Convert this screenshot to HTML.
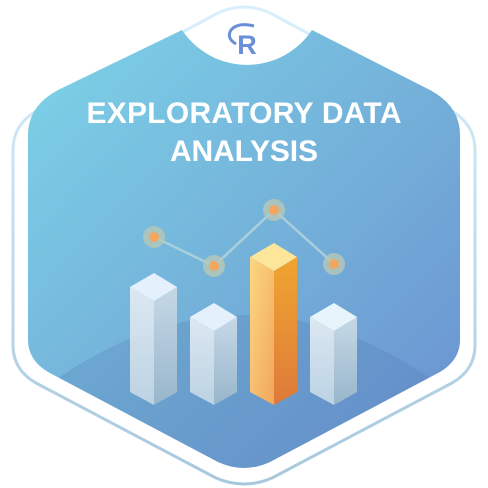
<html style="margin:0;width:488px;height:488px;overflow:hidden"><body style="margin:0;width:488px;height:488px;background:#fff;overflow:hidden">
<svg width="488" height="488" viewBox="0 0 488 488" style="display:block;position:absolute;left:0;top:0">
<defs>
<linearGradient id="bg" x1="0" y1="0" x2="1" y2="1">
<stop offset="0" stop-color="#7dd3e8"/><stop offset="0.5" stop-color="#74b2da"/><stop offset="1" stop-color="#6a8fd0"/></linearGradient>
<linearGradient id="br" x1="0" y1="0" x2="0" y2="1"><stop offset="0" stop-color="#d8f0fb"/><stop offset="1" stop-color="#a8c8de"/></linearGradient>
<linearGradient id="og" x1="0" y1="0" x2="1" y2="1"><stop offset="0" stop-color="#fcd880"/><stop offset="1" stop-color="#f2a65e"/></linearGradient>
<linearGradient id="og2" x1="0" y1="0" x2="0" y2="1"><stop offset="0" stop-color="#f0a530"/><stop offset="1" stop-color="#de7a3a"/></linearGradient>
<linearGradient id="wl" x1="0" y1="0" x2="0" y2="1"><stop offset="0" stop-color="#dce8f2"/><stop offset="1" stop-color="#bcd2e2"/></linearGradient>
<linearGradient id="wr" x1="0" y1="0" x2="0" y2="1"><stop offset="0" stop-color="#c6d8e6"/><stop offset="1" stop-color="#98b6cc"/></linearGradient>
<clipPath id="cp"><path d="M182 30 A78 78 0 0 0 312 30 L430 90 Q460 106 460 135 L460 340 Q460 360 440 372 L270 462 Q244 474 218 462 L48 372 Q28 360 28 340 L28 135 Q28 106 58 90Z"/></clipPath>
</defs>
<path d="M244 7 Q258 7 272 14 L450 110 Q475 124 475 150 L475 345 Q475 370 452 383 L272 478 Q244 490 216 478 L36 383 Q13 370 13 345 L13 150 Q13 124 38 110 L216 14 Q230 7 244 7Z" fill="#fff" stroke="url(#br)" stroke-width="3"/>
<g clip-path="url(#cp)">
<rect x="28" y="28" width="432" height="448" fill="url(#bg)"/>
<path d="M28 400 Q244 230 460 400 L460 475 L28 475Z" fill="#4f78b0" opacity="0.25"/>
</g>
<text x="247" y="54" text-anchor="middle" font-family="Liberation Sans" font-weight="bold" font-size="27" fill="#6a8fd6">R</text>
<path d="M236 44 Q226 38 231 30 Q238 22 254 26" fill="none" stroke="#6a8fd6" stroke-width="3"/>
<g font-family="Liberation Sans, sans-serif" font-weight="bold" font-size="30" fill="#fff" text-anchor="middle">
<text x="244" y="123" textLength="315">EXPLORATORY DATA</text>
<text x="244" y="161" textLength="148">ANALYSIS</text></g>
<polyline points="154,237 214,266 274,210 334,264" fill="none" stroke="#b8d4dc" stroke-width="2.5" opacity=".8"/>
<g fill="#b8c8b8" opacity=".8"><circle cx="154" cy="237" r="11"/><circle cx="214" cy="266" r="11"/><circle cx="274" cy="210" r="11"/><circle cx="334" cy="264" r="11"/></g>
<g fill="#f2a65e"><circle cx="154" cy="237" r="5"/><circle cx="214" cy="266" r="5"/><circle cx="274" cy="210" r="5"/><circle cx="334" cy="264" r="5"/></g>
<path d="M130 287 L154 301 L154 405 L130 392Z" fill="url(#wl)"/>
<path d="M154 301 L177 287 L177 392 L154 405Z" fill="url(#wr)"/>
<path d="M154 273 L177 287 L154 301 L130 287Z" fill="#e4f1fc"/>
<path d="M190 317 L214 331 L214 405 L190 392Z" fill="url(#wl)"/>
<path d="M214 331 L237 317 L237 392 L214 405Z" fill="url(#wr)"/>
<path d="M214 303 L237 317 L214 331 L190 317Z" fill="#e4f1fc"/>
<path d="M250 257 L274 271 L274 405 L250 392Z" fill="url(#og)"/>
<path d="M274 271 L297 257 L297 392 L274 405Z" fill="url(#og2)"/>
<path d="M274 243 L297 257 L274 271 L250 257Z" fill="#fde59a"/>
<path d="M310 317 L334 331 L334 405 L310 392Z" fill="url(#wl)"/>
<path d="M334 331 L357 317 L357 392 L334 405Z" fill="url(#wr)"/>
<path d="M334 303 L357 317 L334 331 L310 317Z" fill="#e8f4fc"/>
</svg>
</body></html>
